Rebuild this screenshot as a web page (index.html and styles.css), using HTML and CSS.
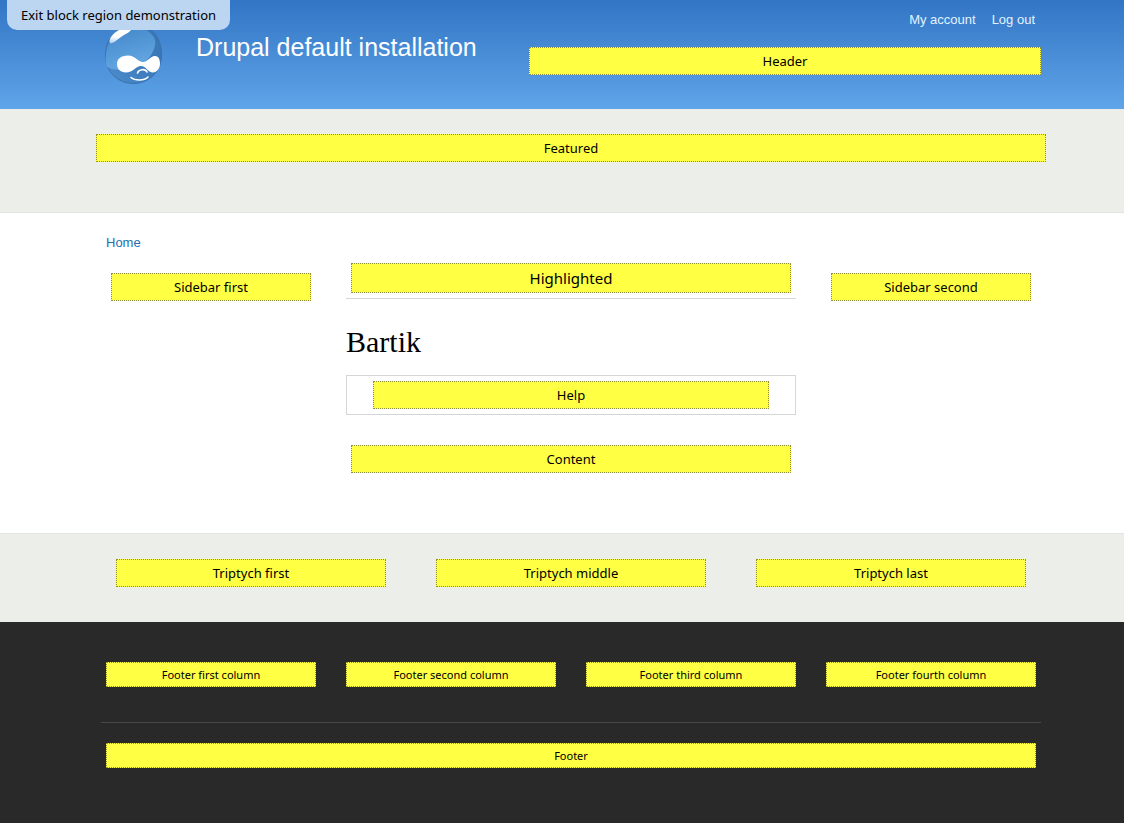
FILE: index.html
```html
<!DOCTYPE html>
<html lang="en">
<head>
<meta charset="utf-8">
<title>Bartik | Drupal default installation</title>
<meta name="viewport" content="width=device-width, initial-scale=1">
<link rel="stylesheet" href="styles.css">
</head>
<body>
<a class="exit-link" href="#">Exit block region demonstration</a>
<header class="header">
  <div class="wrap header-inner">
    <a class="logo" href="#" aria-label="Home page">
      <svg viewBox="0 0 57 64" width="57" height="64" aria-hidden="true">
        <defs>
          <linearGradient id="ball" x1="0" y1="0" x2="0.3" y2="1">
            <stop offset="0" stop-color="#3f83c6"/>
            <stop offset="1" stop-color="#63a6e2"/>
          </linearGradient>
          <linearGradient id="shade" x1="0" y1="1" x2="1" y2="0.3">
            <stop offset="0" stop-color="#4f8fce"/>
            <stop offset="0.5" stop-color="#3f7ebf"/>
            <stop offset="1" stop-color="#3a76b4"/>
          </linearGradient>
          <linearGradient id="shine" x1="0.6" y1="0" x2="0.3" y2="1">
            <stop offset="0" stop-color="#ffffff"/>
            <stop offset="0.6" stop-color="#ffffff"/>
            <stop offset="1" stop-color="#b4d5f2"/>
          </linearGradient>
        </defs>
        <path d="M36 1c3 5 7 6 11 10 6 5 9.500 13 9.500 24 0 16-12 28.500-28 28.500S.5 51 .5 36C.5 24 5 16 12 11 18 7 33 9 36 1z" fill="url(#shade)" stroke="#3971ad"/>
        <path d="M36 4c2 4 6 6 9 9 4 3 6 7 5 12-2 11-11 21-25 24-9 2-18 1-23-2-4-12 1-27 11-35C19 9 33 10 36 4z" fill="url(#ball)"/>
        <path d="M5 23c-2-4 3-10 9-13 5-2 10-2 12 0-2 3-6 4-10 7s-8 7-11 6z" fill="url(#shine)"/>
        <path d="M23 35.500c7 0 10 6.500 15 6.500s7-6 12-6c4 0 5 4 5 8s-3 8.500-7 8.500c-5 0-7-6.500-12-6.500s-8 6.500-15 6.500c-6 0-9-4-9-8.500 0-5 4-8.500 11-8.500z" fill="#fff"/>
        <path d="M32.500 53c1-4 8-4.500 9.500-1M26 57.500c4 3.500 13 3.500 17-.5" fill="none" stroke="#fff" stroke-width="1.600" stroke-linecap="round"/>
      </svg>
    </a>
    <a class="site-name" href="#">Drupal default installation</a>
    <div class="header-side">
      <nav class="user-links" aria-label="User menu"><a href="#">My account</a><a href="#">Log out</a></nav>
      <div class="region">Header</div>
    </div>
  </div>
</header>
<section class="featured">
  <div class="wrap featured-inner"><div class="region">Featured</div></div>
</section>
<main class="main">
  <div class="wrap">
    <nav class="breadcrumb" aria-label="Breadcrumb"><a href="#">Home</a></nav>
    <div class="columns">
      <aside class="sidebar"><div class="region">Sidebar first</div></aside>
      <div class="content">
        <div class="highlighted"><div class="region region-large">Highlighted</div></div>
        <h1 class="title">Bartik</h1>
        <div class="help"><div class="region">Help</div></div>
        <div class="body"><div class="region">Content</div></div>
      </div>
      <aside class="sidebar"><div class="region">Sidebar second</div></aside>
    </div>
  </div>
</main>
<section class="triptych">
  <div class="wrap triptych-inner">
    <div class="region">Triptych first</div>
    <div class="region">Triptych middle</div>
    <div class="region">Triptych last</div>
  </div>
</section>
<footer class="footer">
  <div class="wrap footer-inner">
    <div class="footer-columns">
      <div class="region region-small">Footer first column</div>
      <div class="region region-small">Footer second column</div>
      <div class="region region-small">Footer third column</div>
      <div class="region region-small">Footer fourth column</div>
    </div>
    <div class="footer-bottom"><div class="region region-small">Footer</div></div>
  </div>
</footer>
</body>
</html>
```
FILE: styles.css
```css
* { box-sizing: border-box; }

body {
  display: flex;
  flex-direction: column;
  min-height: 100vh;
  margin: 0;
  background: #292929;
  color: #000;
  font-family: "Liberation Sans", Arial, sans-serif;
  font-size: 13px;
  line-height: 18px;
}

a { text-decoration: none; }

.header, .featured, .main, .triptych, .footer { padding-left: 18px; }

.wrap { max-width: 960px; margin: 0 auto; }

.region {
  padding: 4px;
  border: 1px dotted #8f8f3a;
  background: #ffff44;
  color: #000;
  font-family: "Noto Sans", "Lucida Grande", sans-serif;
  font-size: 13px;
  line-height: 18px;
  text-align: center;
}
.region-large { font-size: 15px; line-height: 20px; }
.region-small { font-size: 11px; line-height: 15px; }

.exit-link {
  position: absolute;
  top: 0;
  left: 7px;
  z-index: 2;
  padding: 6px 14px;
  border-radius: 0 0 10px 10px;
  background: #bcd5f0;
  color: #000;
  font-family: "Noto Sans", "Lucida Grande", sans-serif;
}

.header { background: linear-gradient(#3275c5, #5fa5e8); }
.header-inner {
  display: flex;
  align-items: flex-start;
  padding: 10px 10px 25px 14px;
}
.logo { padding-top: 10px; }
.logo svg { display: block; }
.site-name {
  flex: 1;
  padding: 22px 0 0 34px;
  color: #fff;
  font-size: 25px;
  line-height: 30px;
}
.header-side { width: 512px; }
.user-links {
  display: flex;
  justify-content: flex-end;
  gap: 16px;
  padding: 1px 6px 18px 0;
}
.user-links a { color: #e2f3ff; }

.featured { background: #eceee9; border-bottom: 1px solid #e3e5df; }
.featured-inner { padding: 25px 5px 50px; }

.main { background: #fff; }
.breadcrumb { padding: 21px 15px 0; }
.breadcrumb a { color: #2270b2; }
.columns {
  display: grid;
  grid-template-columns: 200fr 450fr 200fr;
  gap: 35px;
  padding: 11px 20px 60px;
}
.sidebar { padding-top: 10px; }
.highlighted { padding: 0 5px 5px; border-bottom: 1px solid #d3d7d9; }
.title {
  margin: 25px 0 15px;
  font-family: "Liberation Serif", Georgia, serif;
  font-size: 30px;
  font-weight: 400;
  line-height: 36px;
}
.help { padding: 5px 26px; border: 1px solid #d3d7d9; }
.body { padding: 30px 5px 0; }

.triptych { background: #eceee9; border-top: 1px solid #e3e5e5; }
.triptych-inner {
  display: grid;
  grid-template-columns: repeat(3, 1fr);
  gap: 50px;
  padding: 25px 25px 35px;
}

.footer { flex: 1; background: #292929; }
.footer-inner { padding: 40px 10px 55px; }
.footer-columns {
  display: grid;
  grid-template-columns: repeat(4, 1fr);
  gap: 30px;
  padding: 0 5px 35px;
  border-bottom: 1px solid #484848;
}
.footer-bottom { padding: 20px 5px 0; }
```
